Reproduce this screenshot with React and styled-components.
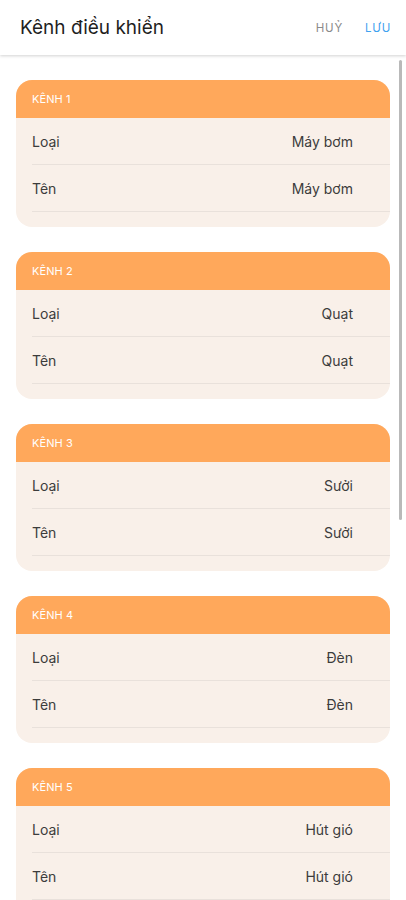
import React from 'react';
import styled, { createGlobalStyle } from 'styled-components';

const GlobalStyle = createGlobalStyle`
  html, body {
    margin: 0;
    padding: 0;
    background: #ffffff;
    font-family: Inter, "Noto Sans", Arial, sans-serif;
  }
  * { box-sizing: border-box; }
`;

const Screen = styled.div`
  position: relative;
  width: 406px;
  height: 900px;
  overflow: hidden;
  background: #ffffff;
`;

const TopBar = styled.div`
  height: 55px;
  display: flex;
  align-items: center;
  justify-content: space-between;
  padding: 0 15px 0 20px;
  background: #ffffff;
  box-shadow: 0 1px 3px rgba(0, 0, 0, 0.18);
  position: relative;
  z-index: 2;
`;

const Title = styled.h1`
  margin: 0;
  font-size: 19px;
  font-weight: 400;
  color: #1f1f1f;
`;

const Actions = styled.div`
  display: flex;
  gap: 22px;
`;

const ActionButton = styled.span`
  font-size: 11.5px;
  letter-spacing: 0.8px;
  color: ${(p) => (p.primary ? '#3fa2f0' : '#8a8a8a')};
`;

const List = styled.div`
  padding: 25px 16px 0 16px;
  display: flex;
  flex-direction: column;
  gap: 25px;
`;

const Card = styled.section`
  border-radius: 16px;
  overflow: hidden;
  background: #f9f0e9;
  padding-bottom: 15px;
`;

const CardHead = styled.div`
  height: 38px;
  display: flex;
  align-items: center;
  padding-left: 16px;
  background: #ffa85b;
  color: #ffffff;
  font-size: 11px;
  letter-spacing: 0.1px;
`;

const Row = styled.div`
  margin-left: 16px;
  height: 47px;
  display: flex;
  align-items: center;
  justify-content: space-between;
  padding-right: 37px;
  border-bottom: 1px solid #e9e1db;
  font-size: 14px;
  color: #3c3c3c;
`;

const Scrollbar = styled.div`
  position: absolute;
  right: 4px;
  top: 60px;
  width: 3px;
  height: 460px;
  border-radius: 2px;
  background: #b9b9b9;
`;

const channels = [
  { name: 'KÊNH 1', type: 'Máy bơm', label: 'Máy bơm' },
  { name: 'KÊNH 2', type: 'Quạt', label: 'Quạt' },
  { name: 'KÊNH 3', type: 'Sưởi', label: 'Sưởi' },
  { name: 'KÊNH 4', type: 'Đèn', label: 'Đèn' },
  { name: 'KÊNH 5', type: 'Hút gió', label: 'Hút gió' },
];

export default function App() {
  return (
    <Screen>
      <GlobalStyle />
      <TopBar>
        <Title>Kênh điều khiển</Title>
        <Actions>
          <ActionButton>HUỶ</ActionButton>
          <ActionButton primary>LƯU</ActionButton>
        </Actions>
      </TopBar>
      <List>
        {channels.map((c) => (
          <Card key={c.name}>
            <CardHead>{c.name}</CardHead>
            <Row>
              <span>Loại</span>
              <span>{c.type}</span>
            </Row>
            <Row>
              <span>Tên</span>
              <span>{c.label}</span>
            </Row>
          </Card>
        ))}
      </List>
      <Scrollbar />
    </Screen>
  );
}
